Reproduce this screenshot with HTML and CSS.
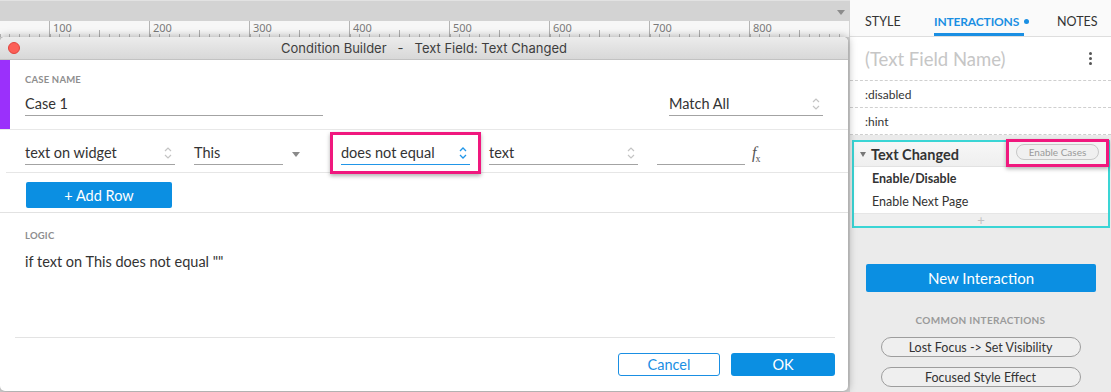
FILE: index.html
```html
<!DOCTYPE html>
<html>
<head>
<meta charset="utf-8">
<title>Condition Builder</title>
<link rel="stylesheet" href="styles.css">
</head>
<body>
<div class="app">
  <div class="canvas">
    <div class="topbar"><span class="topbar-tri"></span></div>
    <div class="ruler">
      <div class="rseg rseg-first"></div>
      <div class="rseg"><span>100</span></div>
      <div class="rseg"><span>200</span></div>
      <div class="rseg"><span>300</span></div>
      <div class="rseg"><span>400</span></div>
      <div class="rseg"><span>500</span></div>
      <div class="rseg"><span>600</span></div>
      <div class="rseg"><span>700</span></div>
      <div class="rseg"><span>800</span></div>
    </div>
    <div class="dialog">
      <div class="titlebar">
        <span class="close"></span>
        <span class="title">Condition Builder   -   Text Field: Text Changed</span>
        <span class="spacer"></span>
      </div>
      <div class="case">
        <div class="casebar"></div>
        <div class="case-main">
          <div class="label">CASE NAME</div>
          <div class="case-fields">
            <div class="field w-case">Case 1</div>
            <div class="field w-match">Match All
              <svg class="chev" width="8" height="14" viewBox="0 0 8 14"><path d="M1 5 L4 2 L7 5 M1 9 L4 12 L7 9" fill="none" stroke="#c4c4c4" stroke-width="1.2"/></svg>
            </div>
          </div>
        </div>
      </div>
      <div class="rows">
        <div class="cond">
          <div class="field f1">text on widget
            <svg class="chev" width="8" height="14" viewBox="0 0 8 14"><path d="M1 5 L4 2 L7 5 M1 9 L4 12 L7 9" fill="none" stroke="#c4c4c4" stroke-width="1.2"/></svg>
          </div>
          <div class="field f2">This</div>
          <span class="dd-tri"></span>
          <div class="pinkbox">
            <div class="field f3">does not equal
              <svg class="chev" width="8" height="14" viewBox="0 0 8 14"><path d="M1 5 L4 2 L7 5 M1 9 L4 12 L7 9" fill="none" stroke="#2196e8" stroke-width="1.3"/></svg>
            </div>
          </div>
          <div class="field f4">text
            <svg class="chev" width="8" height="14" viewBox="0 0 8 14"><path d="M1 5 L4 2 L7 5 M1 9 L4 12 L7 9" fill="none" stroke="#c4c4c4" stroke-width="1.2"/></svg>
          </div>
          <div class="field f5"></div>
          <span class="fx"><i>f</i><sub>x</sub></span>
        </div>
        <button class="btn-primary addrow">+ Add Row</button>
      </div>
      <div class="logic">
        <div class="label">LOGIC</div>
        <div class="logic-text">if text on This does not equal ""</div>
      </div>
      <div class="footer">
        <button class="btn-outline">Cancel</button>
        <button class="btn-primary ok">OK</button>
      </div>
    </div>
  </div>

  <aside class="panel">
    <div class="tabs">
      <div class="tab tab-style">STYLE</div>
      <div class="tab tab-int">INTERACTIONS<span class="dot"></span></div>
      <div class="tab tab-notes">NOTES</div>
    </div>
    <div class="name-row">
      <span>(Text Field Name)</span>
      <span class="kebab"><i></i><i></i><i></i></span>
    </div>
    <div class="state-row">:disabled</div>
    <div class="state-row">:hint</div>
    <div class="event-box">
      <div class="event-head">
        <span class="ev-tri"></span>
        <span class="ev-title">Text Changed</span>
        <div class="pink-small"><span class="pill-sm">Enable Cases</span></div>
      </div>
      <div class="ev-row ev-bold">Enable/Disable</div>
      <div class="ev-row">Enable Next Page</div>
      <div class="ev-foot">+</div>
    </div>
    <button class="btn-primary new-int">New Interaction</button>
    <div class="common-label">COMMON INTERACTIONS</div>
    <button class="pill">Lost Focus -&gt; Set Visibility</button>
    <button class="pill pill-2">Focused Style Effect</button>
  </aside>
</div>
</body>
</html>
```

FILE: styles.css
```css
* { box-sizing: border-box; }
html, body { margin: 0; padding: 0; }
body {
  width: 1111px;
  height: 392px;
  overflow: hidden;
  font-family: Lato, "Open Sans", sans-serif;
  color: #333;
  background: #d6d6d6;
}
button { font-family: inherit; cursor: default; }

.app { display: flex; height: 392px; }

/* ---------- canvas ---------- */
.canvas {
  width: 850px;
  display: flex;
  flex-direction: column;
  background: #d4d4d4;
  position: relative;
  z-index: 2;
}
.topbar {
  height: 21px;
  background: #d3d3d3;
  border-top: 1px solid #e2e2e2;
  display: flex;
  align-items: center;
  justify-content: flex-end;
  padding-right: 5px;
}
.topbar-tri {
  width: 0; height: 0;
  border-left: 4px solid transparent;
  border-right: 4px solid transparent;
  border-top: 5px solid #8c8c8c;
  margin-top: 2px;
}
.ruler {
  height: 16px;
  background: #f7f7f7;
  display: flex;
  width: 849px;
}
.rseg {
  width: 100px;
  height: 16px;
  border-left: 1px solid #b5b5b5;
  background-image:
    linear-gradient(#b0b0b0, #b0b0b0),
    repeating-linear-gradient(to right, #b8b8b8 0 1px, transparent 1px 10px);
  background-size: 1px 7px, 100% 3px;
  background-position: 49px bottom, 9px bottom;
  background-repeat: no-repeat, repeat-x;
  font-family: "Noto Sans", sans-serif;
  font-size: 11px;
  line-height: 13px;
  color: #7a7a7a;
  padding-left: 3px;
}
.rseg-first {
  width: 49px;
  border-left: 0;
  background-image: repeating-linear-gradient(to right, #b8b8b8 0 1px, transparent 1px 10px);
  background-size: 100% 3px;
  background-position: 9px bottom;
  background-repeat: repeat-x;
}

/* ---------- dialog ---------- */
.dialog {
  width: 848px;
  height: 354px;
  background: #fff;
  border-radius: 5px;
  overflow: hidden;
  box-shadow: 0 0 9px rgba(0, 0, 0, 0.35);
  display: flex;
  flex-direction: column;
}
.titlebar {
  height: 23px;
  flex: none;
  background: linear-gradient(#ececec, #d8d8d8);
  border-bottom: 1px solid #c2c2c2;
  display: flex;
  align-items: center;
  padding: 0 8px;
}
.close {
  width: 12px; height: 12px;
  border-radius: 50%;
  background: #fc5f57;
  border: 0.5px solid #e0443e;
}
.spacer { width: 12px; }
.title {
  flex: 1;
  text-align: center;
  white-space: pre;
  font-family: Inter, "Noto Sans", sans-serif;
  font-size: 13px;
  color: #3e3e3e;
}

.label {
  font-size: 9.5px;
  font-weight: 700;
  color: #8e8e8e;
  letter-spacing: 0.2px;
  line-height: 12px;
}

.case {
  height: 70px;
  flex: none;
  display: flex;
  border-bottom: 1px solid #e8e8e8;
}
.casebar { width: 10px; background: #9b30fb; }
.case-main { flex: 1; padding: 14px 25px 0 15px; }
.case-fields {
  display: flex;
  justify-content: space-between;
  margin-top: 6px;
}

.field {
  height: 24px;
  border-bottom: 1.5px solid #a3a3a3;
  font-size: 14.5px;
  line-height: 22px;
  display: flex;
  align-items: center;
  justify-content: space-between;
  color: #333;
  padding-right: 3px;
}
.w-case { width: 298px; }
.w-match { width: 154px; }

.rows {
  flex: none;
  border-bottom: 1px solid #e2e2e2;
  padding-bottom: 4px;
}
.cond {
  height: 43px;
  margin-left: 6px;
  border-bottom: 1px solid #e6e6e6;
  display: flex;
  align-items: center;
  padding: 4px 0 0 19px;
}
.f1 { width: 150px; }
.f2 { width: 89px; margin-left: 19px; }
.dd-tri {
  margin-left: 9px;
  width: 0; height: 0;
  border-left: 4px solid transparent;
  border-right: 4px solid transparent;
  border-top: 5px solid #8a8a8a;
  margin-top: 3px;
}
.pinkbox {
  align-self: flex-start;
  margin-top: -2px;
  margin-left: 30px;
  height: 42px;
  border: 3px solid #f0187e;
  box-shadow: 0 2px 4px rgba(0, 0, 0, 0.3);
  padding: 0 8px;
  display: flex;
  align-items: center;
  background: #fff;
}
.f3 { width: 129px; border-bottom-color: #2196e8; }
.f4 { width: 149px; margin-left: 8px; }
.f5 { width: 88px; margin-left: 19px; }
.fx {
  margin-left: 7px;
  font-family: "Liberation Serif", serif;
  font-size: 16px;
  color: #555;
  margin-top: 2px;
}
.fx sub { font-size: 10px; font-style: normal; margin-left: -1px; }

.btn-primary {
  background: #0b8fe2;
  color: #fff;
  border: 0;
  border-radius: 2px;
  font-size: 14.5px;
  padding: 0;
}
.addrow {
  display: block;
  width: 146px;
  height: 26px;
  margin: 9px 0 0 26px;
}

.logic { flex: 1; padding: 17px 25px 0; }
.logic-text { margin-top: 10px; font-size: 14.5px; line-height: 20px; color: #333; }

.footer {
  height: 54px;
  flex: none;
  margin: 0 13px 0 15px;
  border-top: 1px solid #e3e3e3;
  padding-top: 15px;
  display: flex;
  justify-content: flex-end;
  align-items: flex-start;
  gap: 11px;
}
.btn-outline {
  width: 102px;
  height: 23px;
  background: #fff;
  border: 1px solid #1a8fe3;
  color: #1a8fe3;
  border-radius: 3px;
  font-size: 14.5px;
  padding: 0;
}
.ok { width: 104px; height: 23px; border-radius: 3px; }

/* ---------- right panel ---------- */
.panel {
  width: 261px;
  background: #ebebeb;
  display: flex;
  flex-direction: column;
}
.tabs {
  height: 37px;
  flex: none;
  background: #fafafa;
  border-bottom: 1px solid #dedede;
  display: flex;
  padding-left: 15px;
}
.tab {
  flex: none;
  display: flex;
  align-items: center;
  padding-top: 9px;
  border-bottom: 3px solid transparent;
  font-size: 12.5px;
  color: #333;
  white-space: nowrap;
}
.tab-style { width: 69px; }
.tab-int {
  width: 90px;
  color: #1a8fe3;
  font-weight: 700;
  font-size: 12px;
  letter-spacing: -0.15px;
  border-bottom-color: #1a8fe3;
  margin-right: 33px;
}
.dot {
  flex: none;
  width: 5px; height: 5px;
  border-radius: 50%;
  background: #1a8fe3;
  margin-left: 5px;
}
.name-row {
  height: 44px;
  flex: none;
  background: #fff;
  border-bottom: 1px dashed #cfcfcf;
  display: flex;
  align-items: center;
  justify-content: space-between;
  padding: 0 19px 0 15px;
  font-size: 18.5px;
  color: #c6c6c6;
}
.kebab { display: flex; flex-direction: column; gap: 2px; }
.kebab i { width: 3px; height: 3px; border-radius: 50%; background: #555; display: block; }
.state-row {
  height: 27px;
  flex: none;
  background: #fff;
  border-bottom: 1px dashed #cfcfcf;
  display: flex;
  align-items: center;
  padding-left: 15px;
  font-size: 12px;
  color: #333;
}
.event-box {
  margin: 5px 1px 0 2px;
  border: 2px solid #3ad5d5;
  background: #fff;
  flex: none;
}
.event-head {
  height: 25px;
  display: flex;
  align-items: center;
  padding-left: 6px;
  background: linear-gradient(#f7f7f7, #efefef);
  border-bottom: 1px solid #e2e2e2;
}
.ev-tri {
  width: 0; height: 0;
  border-left: 3.5px solid transparent;
  border-right: 3.5px solid transparent;
  border-top: 5px solid #777;
}
.ev-title { margin-left: 5px; font-size: 14.5px; font-weight: 700; color: #333; }
.pink-small {
  margin-left: auto;
  margin-right: -1px;
  align-self: flex-start;
  margin-top: -3px;
  height: 28px;
  border: 3px solid #f0187e;
  box-shadow: 0 2px 4px rgba(0, 0, 0, 0.3);
  padding: 2px 7px 0;
  background: #f3f3f3;
}
.pill-sm {
  display: flex;
  align-items: center;
  justify-content: center;
  width: 83px;
  height: 16px;
  border: 1px solid #c8c8c8;
  border-radius: 8px;
  font-size: 10px;
  color: #9a9a9a;
  background: #f0f0f0;
}
.ev-row {
  height: 23px;
  display: flex;
  align-items: center;
  padding-left: 18px;
  font-size: 12.5px;
  color: #333;
}
.ev-bold { font-weight: 700; }
.ev-foot {
  height: 13px;
  background: #efefef;
  border-top: 1px solid #e6e6e6;
  text-align: center;
  font-size: 13px;
  line-height: 12px;
  color: #c2c2c2;
}
.new-int {
  flex: none;
  margin: 36px 15px 0 16px;
  height: 28px;
  font-size: 15px;
}
.common-label {
  margin-top: 22px;
  text-align: center;
  font-size: 10px;
  font-weight: 700;
  color: #9a9a9a;
  letter-spacing: 0.3px;
  line-height: 12px;
}
.pill {
  flex: none;
  align-self: center;
  width: 200px;
  height: 20px;
  margin-top: 11px;
  border: 1.5px solid #9d9d9d;
  border-radius: 10px;
  background: #efefef;
  font-size: 12.5px;
  color: #333;
  padding: 0;
}
.pill-2 { margin-top: 10px; }
```
